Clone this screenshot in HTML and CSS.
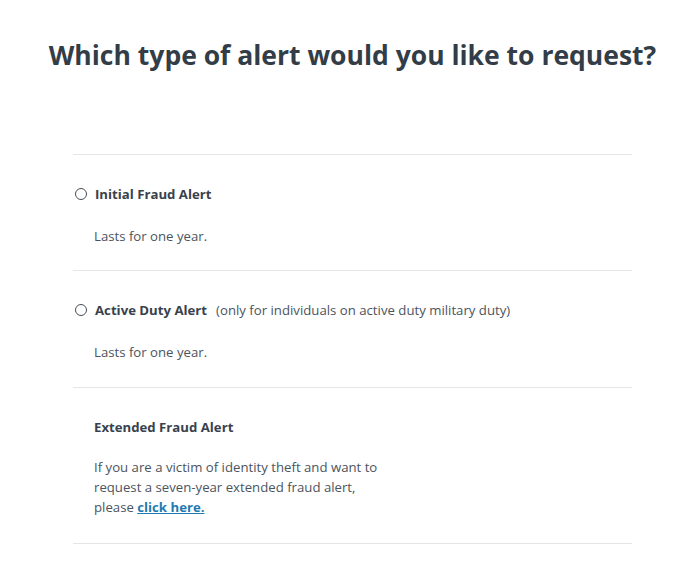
FILE: index.html
```html
<!DOCTYPE html>
<html>
<head>
<meta charset="utf-8">
<link rel="stylesheet" href="styles.css">
</head>
<body>
<h1 class="title">Which type of alert would you like to request?</h1>
<div class="options">
  <div class="option">
    <label class="option-head">
      <span class="radio"></span>
      <span class="option-name">Initial Fraud Alert</span>
    </label>
    <p class="option-desc">Lasts for one year.</p>
  </div>
  <div class="option option-active">
    <label class="option-head">
      <span class="radio"></span>
      <span class="option-name">Active Duty Alert</span>
      <span class="option-note">(only for individuals on active duty military duty)</span>
    </label>
    <p class="option-desc">Lasts for one year.</p>
  </div>
  <div class="option option-extended">
    <div class="option-head plain">
      <span class="option-name">Extended Fraud Alert</span>
    </div>
    <p class="option-desc para">If you are a victim of identity theft and want to request a seven-year extended fraud alert, please <a class="link" href="#">click here.</a></p>
  </div>
</div>
</body>
</html>
```
FILE: styles.css
```css
html, body {
  margin: 0;
  padding: 0;
  background: #ffffff;
}
body {
  font-family: "Open Sans", "Liberation Sans", sans-serif;
  color: #4b545e;
}
.title {
  margin: 0;
  padding: 36px 0 0 5px;
  text-align: center;
  font-size: 26.5px;
  line-height: 38px;
  font-weight: 700;
  color: #333d47;
  letter-spacing: 0;
}
.options {
  margin: 80px 0 0 73px;
  width: 559px;
  border-top: 1px solid #e6e6e6;
}
.option {
  border-bottom: 1px solid #e6e6e6;
  padding: 30px 0 24px;
}
.option-active {
  padding-bottom: 25px;
}
.option-extended {
  padding: 30px 0 26px;
}
.option-head {
  display: flex;
  align-items: center;
  height: 18px;
  font-size: 13.2px;
  line-height: 18px;
}
.option-head.plain {
  padding-left: 21px;
}
.radio {
  width: 10px;
  height: 10px;
  border: 1.7px solid #454e58;
  border-radius: 50%;
  margin: 0 8px 0 2px;
  box-sizing: content-box;
}
.option-name {
  font-weight: 700;
  color: #39424c;
}
.option-note {
  margin-left: 9px;
  color: #4b545e;
}
.option-desc {
  margin: 23px 0 0 21px;
  font-size: 13.2px;
  line-height: 20px;
  color: #4b545e;
}
.para {
  margin-top: 21px;
  max-width: 292px;
}
.link {
  color: #1f7bb0;
  font-weight: 700;
  text-decoration: underline;
}
```
